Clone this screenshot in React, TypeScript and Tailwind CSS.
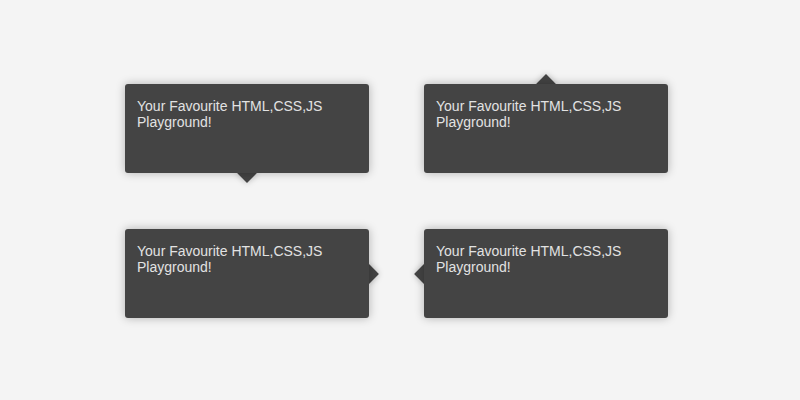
import React from 'react';

type Side = 'bottom' | 'top' | 'right' | 'left';

const arrowClass: Record<Side, string> = {
    bottom: 'left-1/2 -bottom-[7px] -translate-x-1/2',
    top: 'left-1/2 -top-[7px] -translate-x-1/2',
    right: 'top-1/2 -right-[7px] -translate-y-1/2',
    left: 'top-1/2 -left-[7px] -translate-y-1/2',
};

const Tip = ({ side }: { side: Side }) => {
    return (
        <div className="relative w-[244px] h-[89px] rounded-[3px] bg-[#444444] px-3 pt-[14px] shadow-[0_0_10px_rgba(0,0,0,0.28)]">
            {/* arrow sits behind the box, only the outer half shows */}
            <div className={`absolute -z-10 ${arrowClass[side]}`}>
                <div className="w-[14px] h-[14px] rotate-45 bg-[#444444] shadow-[0_0_6px_rgba(0,0,0,0.25)]"></div>
            </div>
            <p className="text-[14px] leading-[16px] text-[#e2e2e2]">
                Your Favourite HTML,CSS,JS Playground!
            </p>
        </div>
    );
};

const App = () => {
    const sides: Side[] = ['bottom', 'top', 'right', 'left'];

    return (
        <div
            className="isolate w-[800px] h-[400px] bg-[#f4f4f4] pl-[125px] pt-[84px]"
            style={{ fontFamily: '"Liberation Sans", Arial, sans-serif' }}
        >
            <div className="grid grid-cols-[244px_244px] gap-x-[55px] gap-y-[56px]">
                {sides.map((s) => (
                    <Tip key={s} side={s} />
                ))}
            </div>
        </div>
    );
};

export default App;
